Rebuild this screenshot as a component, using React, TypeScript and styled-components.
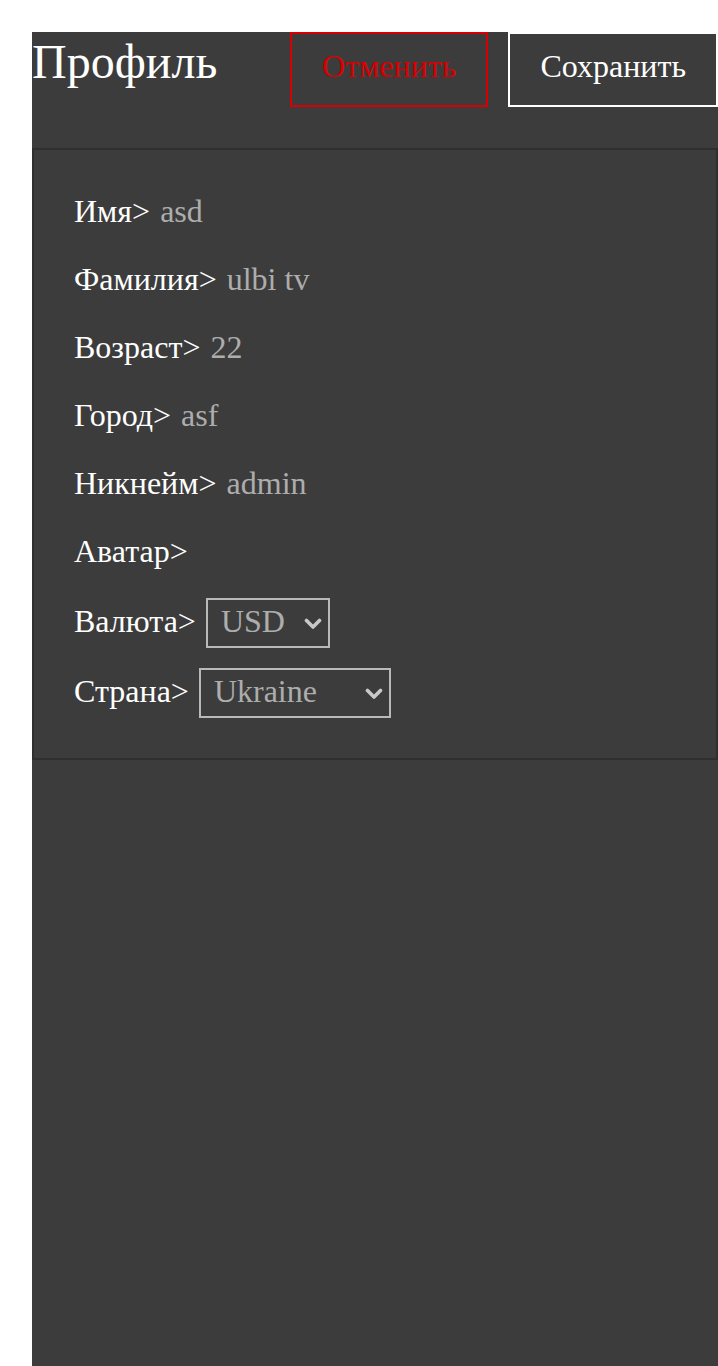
import React from "react";
import styled, { createGlobalStyle } from "styled-components";

const GlobalStyle = createGlobalStyle`
  html, body { margin: 0; padding: 0; background: #ffffff; }
  * { box-sizing: border-box; }
`;

const Page = styled.div`
  padding: 32px 0 0 32px;
  min-height: 100vh;
  display: flex;
  flex-direction: column;
`;

const Panel = styled.main`
  flex: 1;
  background: #3c3c3c;
  display: flex;
  flex-direction: column;
`;

const Header = styled.header`
  display: flex;
  justify-content: space-between;
  align-items: flex-start;
  height: 116px;
`;

const Title = styled.h1`
  margin: 0;
  font-family: "Liberation Serif", serif;
  font-weight: normal;
  font-size: 48px;
  line-height: 60px;
  color: #ffffff;
`;

const Actions = styled.div`
  display: flex;
  gap: 20px;
`;

const Button = styled.button<{ $variant: "danger" | "primary" }>`
  font-family: "Liberation Serif", serif;
  font-size: 32px;
  line-height: 39px;
  padding: 13px 30px 19px;
  background: transparent;
  cursor: pointer;
  color: ${(p) => (p.$variant === "danger" ? "#d80000" : "#ffffff")};
  border: 2px solid ${(p) => (p.$variant === "danger" ? "#d80000" : "#ffffff")};
`;

const Card = styled.section`
  border: 2px solid #2f2f2f;
  padding: 40px;
  display: flex;
  flex-direction: column;
  gap: 20px;
`;

const Label = styled.span`
  font-family: "Liberation Serif", serif;
  font-size: 32px;
  color: #ffffff;
  margin-right: 10px;
  white-space: nowrap;
`;

const Row = styled.label<{ $tall?: boolean }>`
  display: flex;
  align-items: center;
  height: ${(p) => (p.$tall ? "50px" : "48px")};
  padding-bottom: ${(p) => (p.$tall ? "0" : "6px")};

  & > ${Label} {
    margin-bottom: ${(p) => (p.$tall ? "4px" : "0")};
  }
`;

const ValueInput = styled.input`
  font-family: "Liberation Serif", serif;
  font-size: 32px;
  color: #adadad;
  background: transparent;
  border: none;
  outline: none;
  padding: 0;
  width: 300px;
`;

const SelectWrap = styled.span<{ $w: number }>`
  position: relative;
  display: inline-flex;
  width: ${(p) => p.$w}px;
  height: 50px;
`;

const Select = styled.select`
  appearance: none;
  -webkit-appearance: none;
  font-family: "Liberation Serif", serif;
  font-size: 32px;
  color: #adadad;
  background: transparent;
  border: 2px solid #b9b9b9;
  border-radius: 0;
  width: 100%;
  height: 100%;
  padding: 0 36px 4px 13px;
  outline: none;
  cursor: pointer;
`;

const Chevron = styled.svg`
  position: absolute;
  right: 8px;
  top: 50%;
  width: 18px;
  height: 12px;
  margin-top: -5px;
  pointer-events: none;
`;

const ChevronIcon = () => (
  <Chevron viewBox="0 0 18 12">
    <path d="M2.5 2.5 L9 9 L15.5 2.5" fill="none" stroke="#c8c8c8" strokeWidth="3.6" strokeLinecap="round" strokeLinejoin="round" />
  </Chevron>
);

const fields = [
  { label: "Имя>", value: "asd" },
  { label: "Фамилия>", value: "ulbi tv" },
  { label: "Возраст>", value: "22" },
  { label: "Город>", value: "asf" },
  { label: "Никнейм>", value: "admin" },
  { label: "Аватар>", value: "" },
];

export default function App() {
  return (
    <>
      <GlobalStyle />
      <Page>
        <Panel>
          <Header>
            <Title>Профиль</Title>
            <Actions>
              <Button $variant="danger">Отменить</Button>
              <Button $variant="primary">Сохранить</Button>
            </Actions>
          </Header>
          <Card>
            {fields.map((f) => (
              <Row key={f.label}>
                <Label>{f.label}</Label>
                <ValueInput defaultValue={f.value} />
              </Row>
            ))}
            <Row $tall>
              <Label>Валюта&gt;</Label>
              <SelectWrap $w={124}>
                <Select defaultValue="USD">
                  <option value="RUB">RUB</option>
                  <option value="EUR">EUR</option>
                  <option value="USD">USD</option>
                </Select>
                <ChevronIcon />
              </SelectWrap>
            </Row>
            <Row $tall>
              <Label>Страна&gt;</Label>
              <SelectWrap $w={192}>
                <Select defaultValue="Ukraine">
                  <option value="Russia">Russia</option>
                  <option value="Belarus">Belarus</option>
                  <option value="Ukraine">Ukraine</option>
                  <option value="Kazakhstan">Kazakhstan</option>
                  <option value="Armenia">Armenia</option>
                </Select>
                <ChevronIcon />
              </SelectWrap>
            </Row>
          </Card>
        </Panel>
      </Page>
    </>
  );
}
